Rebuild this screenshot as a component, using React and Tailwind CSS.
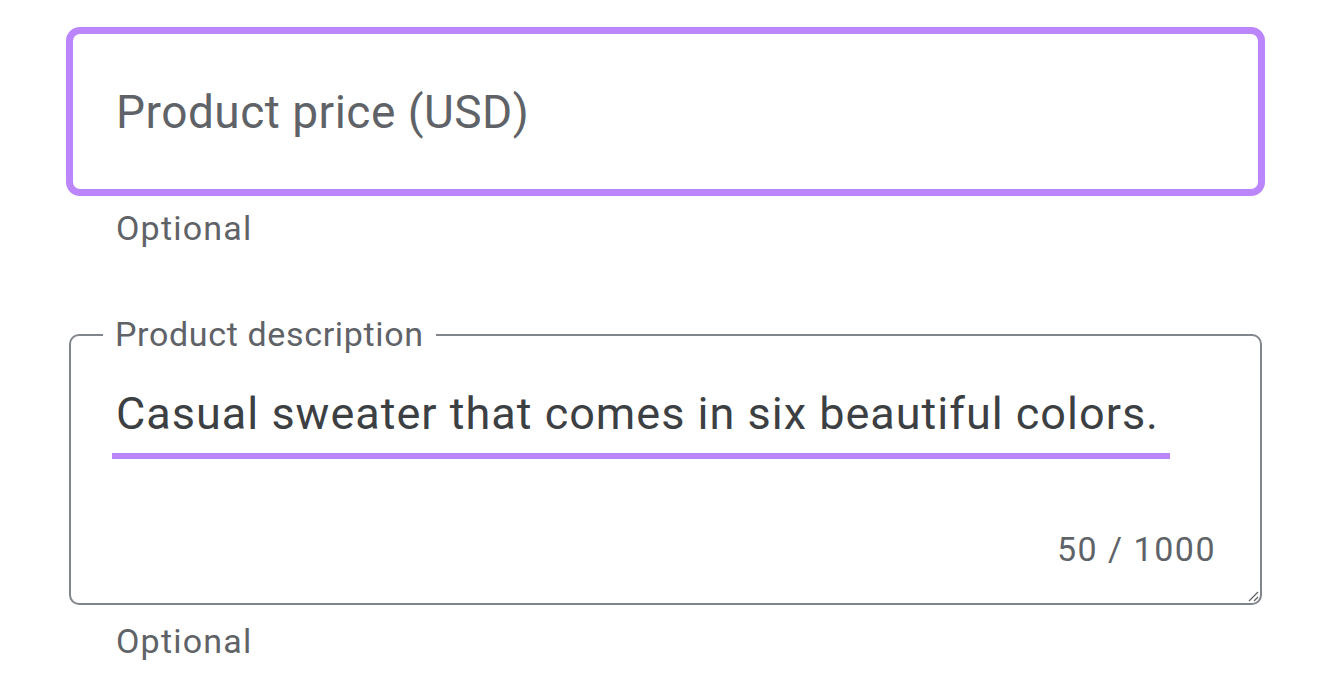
import React from "react";

export default function App() {
  return (
    <div className="w-[1332px] h-[693px] bg-white font-['Roboto',sans-serif] pl-[66px] pt-[27px] overflow-hidden">
      {/* Field 1 - focused */}
      <div className="w-[1199px] h-[169px] border-[7px] border-[#bb86fc] rounded-[14px] flex items-center pl-[43px]">
        <span className="text-[46px] leading-[54px] text-[#5f6368] tracking-[0.5px]">Product price (USD)</span>
      </div>
      <div className="mt-[12px] pl-[50px] text-[34px] leading-[40px] text-[#5f6368] tracking-[1.2px]">Optional</div>

      {/* Field 2 - textarea */}
      <fieldset className="relative mt-[70px] ml-[3px] w-[1193px] h-[287px] border-2 border-[#80868b] rounded-[10px]">
        <legend className="ml-[32px] px-[12px] text-[34px] leading-[33px] text-[#5f6368] tracking-[0.65px]">Product description</legend>
        <div className="pt-[36px] pl-[45px] text-[45px] leading-[54px] text-[#3c4043] tracking-[1px] whitespace-nowrap">
          Casual sweater that comes in six beautiful colors.
        </div>
        <div className="mt-[12px] ml-[41px] w-[1058px] h-[6px] bg-[#bb86fc]" />
        <div className="mt-[70px] pr-[44px] text-right text-[34px] leading-[40px] text-[#5f6368] tracking-[1.5px]">50 / 1000</div>
        <svg className="absolute right-[1px] bottom-[1px]" width="12" height="12" viewBox="0 0 12 12">
          <line x1="2" y1="11" x2="11" y2="2" stroke="#5f6368" strokeWidth="1.2" />
          <line x1="7" y1="11" x2="11" y2="7" stroke="#5f6368" strokeWidth="1.2" />
        </svg>
      </fieldset>
      <div className="mt-[16px] pl-[50px] text-[34px] leading-[40px] text-[#5f6368] tracking-[1.2px]">Optional</div>
    </div>
  );
}
